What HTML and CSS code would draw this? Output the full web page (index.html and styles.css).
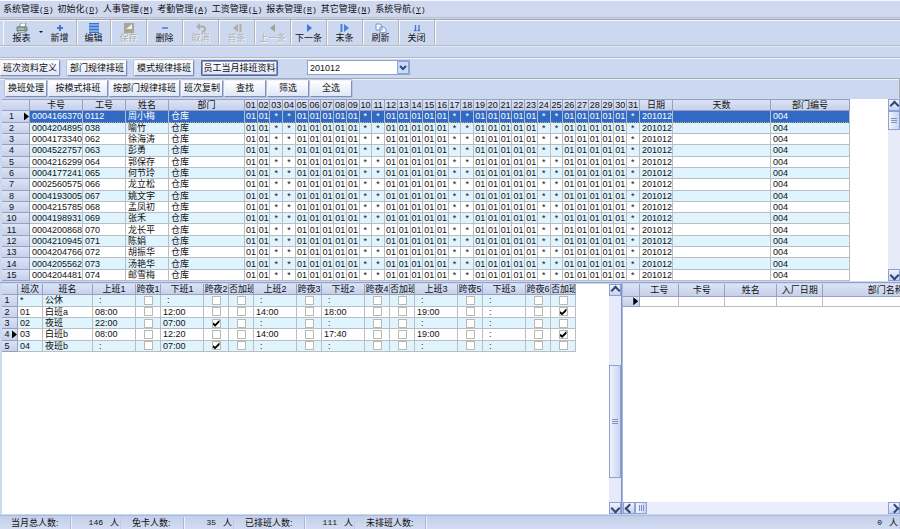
FILE: index.html
```html
<!DOCTYPE html>
<html lang="zh-CN">
<head>
<meta charset="utf-8">
<title>员工当月排班资料</title>
<link rel="stylesheet" href="styles.css">
</head>
<body>
<nav class="menubar">
  <button class="menu">系统管理<span class="key">(<u>S</u>)</span></button>
  <button class="menu">初始化<span class="key">(<u>D</u>)</span></button>
  <button class="menu">人事管理<span class="key">(<u>M</u>)</span></button>
  <button class="menu">考勤管理<span class="key">(<u>A</u>)</span></button>
  <button class="menu">工资管理<span class="key">(<u>L</u>)</span></button>
  <button class="menu">报表管理<span class="key">(<u>R</u>)</span></button>
  <button class="menu">其它管理<span class="key">(<u>N</u>)</span></button>
  <button class="menu">系统导航<span class="key">(<u>Y</u>)</span></button>
</nav>
<div class="toolbar">
  <button class="tool report"><svg viewBox="0 0 12 10"><path d="M3 4 5 0h5L9 4z" fill="#fff" stroke="#667" stroke-width=".7"/><path d="M1 4h10v4H1z" fill="#aab4b8" stroke="#566" stroke-width=".8"/><path d="M2 8h7v1.500H2z" fill="#eee" stroke="#566" stroke-width=".5"/><path d="M8 6h2" stroke="#3a4"/></svg>报表</button>
  <button class="drop" aria-label="更多报表"></button>
  <button class="tool first">
    <svg viewBox="0 0 12 10"><path d="M6 2v6M3 5h6" stroke="#4b74d4" stroke-width="2"/></svg>新增</button>
  <button class="tool first"><svg viewBox="0 0 12 10"><path d="M1 .5h10M1 3.500h10M1 6.500h10M1 9.400h10" stroke="#2f74d8" stroke-width="1.800"/></svg>编辑</button>
  <button class="tool" disabled><svg viewBox="0 0 12 10"><path d="M1 0h10v10H1z" fill="#a8a595"/><path d="M3 6 9 1v5z" fill="#f0f0ea"/></svg>保存</button>
  <button class="tool"><svg viewBox="0 0 12 10"><path d="M3 5h6" stroke="#4b74d4" stroke-width="1.500"/></svg>删除</button>
  <button class="tool" disabled><svg viewBox="0 0 12 10"><path d="M3 3.500h4q3 0 3 2.500T7 9" fill="none" stroke="#b1ae9f" stroke-width="1.800"/><path d="M1 3.500 5 0v7z" fill="#b1ae9f"/></svg>取消</button>
  <button class="tool" disabled><svg viewBox="0 0 12 10"><path d="M7 1v8L2 5z" fill="#b1ae9f"/><path d="M9.500 1v8" stroke="#b1ae9f" stroke-width="2"/></svg>首条</button>
  <button class="tool" disabled><svg viewBox="0 0 12 10"><path d="M8 1v8L3 5z" fill="#a3a193"/></svg>上一条</button>
  <button class="tool"><svg viewBox="0 0 12 10"><path d="M4 1v8l5-4z" fill="#3e78da"/></svg>下一条</button>
  <button class="tool"><svg viewBox="0 0 12 10"><path d="M2.500 1v8" stroke="#4b80dc" stroke-width="2"/><path d="M5 1v8l5-4z" fill="#4b80dc"/></svg>末条</button>
  <button class="tool"><svg viewBox="0 0 12 10"><path d="M1 1h4l2 2v4H1zM5 4h4l2 2v3.500H5z" fill="#eef4ff" stroke="#6d90ca" stroke-width=".9"/></svg>刷新</button>
  <button class="tool"><svg viewBox="0 0 12 10"><path d="M4.500 2v5M8 2v5M3 7.500h2.500M6.500 7.500H9" stroke="#4b74d4" stroke-width="1.300"/></svg>关闭</button>
</div>
<div class="spacer"></div>
<div class="tabs">
  <button class="btn c6">班次资料定义</button>
  <button class="btn c6">部门规律排班</button>
  <button class="btn c6">模式规律排班</button>
  <button class="btn c8 current">员工当月排班资料</button>
  <select class="month" aria-label="月份"><option>201012</option></select>
</div>
<div class="actions">
  <button class="btn c4">换班处理</button>
  <button class="btn c6">按模式排班</button>
  <button class="btn c7">按部门规律排班</button>
  <button class="btn c4">班次复制</button>
  <button class="btn c4">查找</button>
  <button class="btn c4">筛选</button>
  <button class="btn c4">全选</button>
</div>
<section class="roster">
  <div class="view"><table class="grid people" id="people"></table></div>
  <div class="vbar"><button class="arrow up" aria-label="向上"></button><div class="thumb small"></div><div class="track"></div><button class="arrow down" aria-label="向下"></button></div>
</section>
<main class="lower">
  <section class="pane shifts-pane">
    <div class="view"><table class="grid shifts" id="shifts"></table></div>
    <div class="vbar"><button class="arrow up" aria-label="向上"></button><div class="track above"></div><div class="thumb large"></div><div class="track below"></div><button class="arrow down" aria-label="向下"></button></div>
  </section>
  <section class="pane detail-pane">
    <div class="view">
      <table class="grid detail">
        <colgroup><col class="w17"><col class="w39"><col class="w46"><col class="w52"><col class="w46"><col></colgroup>
        <tr><th></th><th>工号</th><th>卡号</th><th>姓名</th><th>入厂日期</th><th>部门名称</th></tr>
        <tr><th class="cur"><i></i></th><td></td><td></td><td></td><td></td><td></td></tr>
      </table>
    </div>
    <div class="hbar"><button class="arrow left" aria-label="向左"></button><div class="thumb"></div><div class="track"></div><button class="arrow right" aria-label="向右"></button></div>
  </section>
</main>
<footer class="status">
  <span class="label">当月总人数:</span><span class="count">146</span><span class="unit">人</span>
  <span class="label short">免卡人数:</span><span class="count">35</span><span class="unit">人</span>
  <span class="label">已排班人数:</span><span class="count">111</span><span class="unit">人</span>
  <span class="label">未排班人数:</span><span class="count last">0</span><span class="unit">人</span>
</footer>
<script src="script.js"></script>
</body>
</html>
```
FILE: styles.css
```css
* { box-sizing: border-box; }
body {
  margin: 0;
  height: 100vh;
  display: flex;
  flex-direction: column;
  overflow: hidden;
  background: #ccd8f0;
  color: #111;
  font: 9px/11px "Liberation Sans", "Noto Sans CJK SC", sans-serif;
}
button, select, input { font: inherit; color: inherit; margin: 0; padding: 0; }
button { border: 0; background: none; white-space: nowrap; }

.menubar { display: flex; gap: 4px; height: 18px; padding: 1px 3px 0; border-top: 1px solid #f4f7fc; border-bottom: 1px solid #b9bfca; background: #cfd8ef; }
.menu { display: flex; align-items: center; }
.key { font: 8px/10px "Liberation Mono", monospace; }

.toolbar { display: flex; height: 27px; margin-top: 1px; padding-left: 3px; border-top: 1px solid #9fa5ad; border-bottom: 1px solid #b7bdc5; box-shadow: inset 0 1px #f6f8fc, 0 1px #dfe7f4; }
.tool { width: 36px; display: flex; flex-direction: column; align-items: center; padding-top: 3px; border-right: 1px solid #b4b8bd; box-shadow: 1px 0 #f4f6fa; line-height: 11px; }
.tool svg { width: 12px; height: 10px; flex: none; }
.tool:disabled { color: #b1b2ae; text-shadow: 1px 1px #f4f6fa; }
.report { border-right: 0; border-left: 1px solid #f4f6fa; box-shadow: none; }
.first { width: 34px; }
.drop { width: 4px; display: flex; align-items: center; justify-content: center; }
.drop::before { content: ""; border: 2px solid transparent; border-top-color: #111; }
.spacer { height: 11px; }

.tabs { display: flex; gap: 7px; height: 21px; padding-top: 2px; border-top: 1px solid #b3b9c1; box-shadow: inset 0 1px #eef2f8; }
.btn { height: 16px; border: 1px solid #8190ba; border-top-color: #f2f5fd; border-left-color: #f2f5fd; border-radius: 1px; background: linear-gradient(#fff, #dfe6f8); box-shadow: 0 0 0 1px #b9c4df; }
.c4 { width: 42px; }
.c6 { width: 60px; }
.c7 { width: 71px; }
.c8 { width: 77px; }
.current { border: 1px solid #5165a3; box-shadow: inset 0 0 0 1px #8998c8; }
.month {
  width: 103px; height: 15px; margin-left: 22px; padding-left: 2px; appearance: none;
  border: 1px solid #8ea4c8; border-radius: 0; line-height: 12px;
  background: url("data:image/svg+xml,%3Csvg xmlns='http://www.w3.org/2000/svg' viewBox='0 0 12 13'%3E%3Cpath d='M.5.5h11v12H.5z' fill='%23ccd9fa' stroke='%238ea4d8'/%3E%3Cpath d='M3 5l3 3 3-3' fill='none' stroke='%23304a80' stroke-width='2'/%3E%3C/svg%3E") right center / 12px 13px no-repeat #fff;
}

.actions { display: flex; gap: 1px; height: 20px; padding: 1px 0 0 5px; border-top: 1px solid #a4abb5; border-right: 1px solid #a4abb5; box-shadow: inset 0 1px #eef2f8; }
.actions .btn { height: 17px; }

.roster { display: flex; margin-top: 1px; padding-left: 2px; background: #fff; }
.roster, .shifts-pane { box-shadow: inset 2px 0 #ccd8f0; }
.view { flex: 1; min-width: 0; overflow: hidden; }
.grid { table-layout: fixed; border-collapse: separate; border-spacing: 0; line-height: 10px; }
.grid th, .grid td { padding: 0; white-space: nowrap; border-right: 1px solid #b9bec5; border-bottom: 1px solid #b9bec5; font-weight: normal; }
.grid th { overflow: hidden; background: linear-gradient(#dbe3f6, #c6d0ea); border-color: #96a2bd; text-align: center; }
.grid td { padding-left: 2px; text-align: left; background: #fff; }
.grid td.day { padding-left: 1px; }
.grid td.rest { padding-left: 4px; }
.people { width: 848px; height: 182px; border-top: 1px solid #96a2bd; }
.people tr:nth-child(odd) td, .shifts tr:nth-child(even) td { background: #e0f4fe; }
.people tr.selected td { background: #316ac5; color: #fff; border-bottom: 1px dotted #c9a878; }
.rowhead { display: flex; align-items: center; justify-content: space-between; }
.rowhead b { flex: 1; font-weight: normal; text-align: center; }
.rowhead i, .cur i { width: 5px; height: 8px; background: #000; clip-path: polygon(0 0, 100% 50%, 0 100%); }
.people .rowhead b { padding-right: 8px; }
.people .selected .rowhead b { padding-right: 3px; }
.shifts .rowhead b { padding-right: 5px; }
.shifts .current-row .rowhead b { padding-right: 0; }
.cur i { display: block; margin-left: 10px; }
.w16 { width: 16px; } .w17 { width: 17px; } .w25 { width: 25px; } .w28 { width: 28px; }
.w33 { width: 33px; } .w39 { width: 39px; } .w43 { width: 43px; } .w46 { width: 46px; }
.w50 { width: 50px; } .w52 { width: 52px; } .w53 { width: 53px; } .w76 { width: 76px; }
.w79 { width: 79px; } .w98 { width: 98px; }

.shifts { width: 574px; height: 68px; }
.shifts td.none { padding-left: 6px; }
.shifts td.check { padding: 0; }
.check input { appearance: none; display: block; width: 9px; height: 9px; margin: 0 auto; border: 1px solid #b9b9b0; background: #fff; }
.check input:checked::before { content: ""; display: block; width: 7px; height: 7px; background: #000; clip-path: polygon(0 35%, 38% 62%, 100% 0, 100% 38%, 38% 100%, 0 70%); }

.lower { flex: 1; min-height: 0; display: flex; margin-top: 1px; border-top: 1px solid #8fa3d0; border-bottom: 1px solid #a9badf; }
.pane { background: #fff; border-top: 1px solid #ccd8f0; border-bottom: 1px solid #ccd8f0; }
.shifts-pane { flex: 622 0 0; display: flex; padding-left: 2px; border-right: 1px solid #8293c3; }
.detail-pane { flex: 278 0 0; min-width: 0; display: flex; flex-direction: column; border-left: 1px solid #a9b8df; }
.detail { width: 326px; height: 23px; }

.vbar { width: 12px; flex: none; display: flex; flex-direction: column; background: #e7ebf9; }
.hbar { height: 12px; display: flex; background: #eaeefa; }
.track { flex: 1; }
.above { flex: 70; }
.below { flex: 24; }
.arrow { width: 12px; height: 12px; flex: none; display: flex; align-items: center; justify-content: center; border: 1px solid #8fa0ce; background: linear-gradient(#eef3ff, #c5d3f6); }
.arrow::before { content: ""; width: 5px; height: 5px; border: solid #34466e; border-width: 2px 0 0 2px; }
.up::before { transform: rotate(45deg); }
.down::before { transform: rotate(225deg); }
.left::before { transform: rotate(-45deg); }
.right::before { transform: rotate(135deg); }
.thumb { display: flex; align-items: center; justify-content: center; width: 12px; border: 1px solid #8fa0ce; background: linear-gradient(90deg, #f1f4ff, #c8d4f3); }
.thumb::before { content: ""; width: 6px; height: 5px; background: repeating-linear-gradient(#8293bd 0 1px, transparent 1px 2px); }
.hbar .thumb::before { width: 5px; height: 6px; background: repeating-linear-gradient(90deg, #8293bd 0 1px, transparent 1px 2px); }
.small { height: 19px; }
.large { flex: 113; }

.status { display: flex; align-items: center; height: 13px; background: linear-gradient(#c3cfe9, #d2dcf2); line-height: 12px; }
.label { width: 71px; padding-left: 11px; border-right: 1px solid #aab7d2; box-shadow: 1px 0 #edf1fa; }
.short { width: 63px; }
.count { width: 32px; text-align: right; font: 8px/12px "Liberation Mono", monospace; }
.unit { width: 18px; padding-right: 1px; text-align: right; border-right: 1px solid #bfcbe2; }
.last { flex: 1; }
```
FILE: script.js
```js
const people = [
  ["0004166370", "0112", "周小梅"], ["0004204895", "038", "喻竹"], ["0004173340", "062", "徐海涛"],
  ["0004522757", "063", "彭勇"], ["0004216299", "064", "郭保存"], ["0004177241", "065", "何节玲"],
  ["0002560575", "066", "龙立松"], ["0004193005", "067", "姚文宇"], ["0004215785", "068", "孟凤初"],
  ["0004198931", "069", "张禾"], ["0004200868", "070", "龙长平"], ["0004210945", "071", "陈娟"],
  ["0004204766", "072", "胡振华"], ["0004205562", "073", "汤艳华"], ["0004204481", "074", "邮雪梅"]
];
const restDays = [3, 4, 10, 11, 17, 18, 24, 25, 31];
const days = Array.from({ length: 31 }, (_, i) => i + 1);
const cols = widths => "<colgroup>" + widths.map(w => w ? `<col class="w${w}">` : "<col>").join("") + "</colgroup>";
const cell = text => `<td>${text}</td>`;
const rowHead = (n, current) => `<th><div class="rowhead"><b>${n}</b>${current ? "<i></i>" : ""}</div></th>`;

document.getElementById("people").innerHTML =
  cols([28, 53, 43, 43, 76, ...days.map(() => 0), 33, 98, 79]) +
  "<tr><th></th><th>卡号</th><th>工号</th><th>姓名</th><th>部门</th>" +
  days.map(d => `<th>${String(d).padStart(2, "0")}</th>`).join("") +
  "<th>日期</th><th>天数</th><th>部门编号</th></tr>" +
  people.map(([card, id, name], i) =>
    `<tr class="${i ? "" : "selected"}">` + rowHead(i + 1, i === 0) + cell(card) + cell(id) +
    cell(name) + cell("仓库") +
    days.map(d => restDays.includes(d) ? '<td class="rest">*</td>' : '<td class="day">01</td>').join("") +
    cell("201012") + cell("") + cell("004") + "</tr>").join("");

const heads = ["班次", "班名", "上班1", "跨夜1", "下班1", "跨夜2", "否加班", "上班2", "跨夜3", "下班2", "跨夜4", "否加班", "上班3", "跨夜5", "下班3", "跨夜6", "否加班"];
const shifts = [
  ["*", "公休", ":", 0, ":", 0, 0, ":", 0, ":", 0, 0, ":", 0, ":", 0, 0],
  ["01", "白班a", "08:00", 0, "12:00", 0, 0, "14:00", 0, "18:00", 0, 0, "19:00", 0, ":", 0, 1],
  ["02", "夜班", "22:00", 0, "07:00", 1, 0, ":", 0, ":", 0, 0, ":", 0, ":", 0, 0],
  ["03", "白班b", "08:00", 0, "12:20", 0, 0, "14:00", 0, "17:40", 0, 0, "19:00", 0, ":", 0, 1],
  ["04", "夜班b", ":", 0, "07:00", 1, 0, ":", 0, ":", 0, 0, ":", 0, ":", 0, 0]
];
const shiftCell = (value, c, row) => {
  if (typeof value === "number")
    return `<td class="check"><input type="checkbox" aria-label="${row[1]} ${heads[c]}"${value ? " checked" : ""}></td>`;
  return value === ":" ? '<td class="none">:</td>' : cell(value);
};
document.getElementById("shifts").innerHTML =
  cols([16, 25, 50, 43, 25, 43, 25, 25, 43, 25, 43, 25, 25, 43, 25, 43, 25, 25]) +
  "<tr><th></th>" + heads.map(h => `<th>${h}</th>`).join("") + "</tr>" +
  shifts.map((row, i) => `<tr class="${i === 3 ? "current-row" : ""}">` + rowHead(i + 1, i === 3) + row.map(shiftCell).join("") + "</tr>").join("");
```
